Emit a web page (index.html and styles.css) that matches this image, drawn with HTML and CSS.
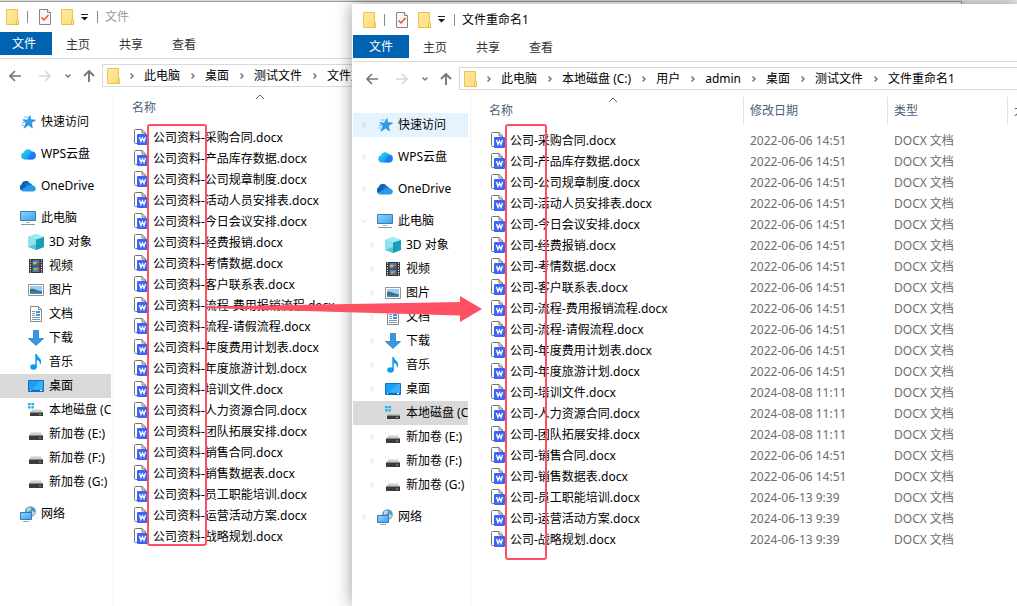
FILE: index.html
```html
<!DOCTYPE html>
<html lang="zh-CN">

<head>
    <meta charset="utf-8">
    <meta name="viewport" content="width=device-width, initial-scale=1.0">
    <title>文件重命名1</title>
    <link rel="stylesheet" href="styles.css">
</head>

<body>
    <!-- icons -->
    <svg class="sprite" aria-hidden="true">
        <defs>
            <linearGradient id="g-folder" x1="0" y1="0" x2="1" y2="1"><stop offset="0" stop-color="#ffe8a0"/><stop offset="1" stop-color="#ffdc78"/></linearGradient>
            <linearGradient id="g-screen" x1="0" y1="0" x2="1" y2="1"><stop offset="0" stop-color="#8fd4ff"/><stop offset="1" stop-color="#3aa0ee"/></linearGradient>
            <linearGradient id="g-cloud" x1="0" y1="0" x2="1" y2="1"><stop offset="0" stop-color="#1fe0e8"/><stop offset="1" stop-color="#1a7af5"/></linearGradient>
            <linearGradient id="g-disk" x1="0" y1="0" x2="0" y2="1"><stop offset="0" stop-color="#e8e8e8"/><stop offset="1" stop-color="#b4b4b4"/></linearGradient>
        </defs>
        <symbol id="folder" viewBox="0 0 13 16">
            <path d="M.5.5h11v10h1v5H.5z" fill="url(#g-folder)" stroke="#e9c24f"/>
            <path d="M10.500 15.500v-4l1-1 1 1v4z" fill="#ffe9a6" stroke="#e3b73c" stroke-width=".8"/>
        </symbol>
        <symbol id="check" viewBox="0 0 12 16">
            <path d="M.5.5h8l3 3v12H.5z" fill="#f7f7f7" stroke="#858585"/>
            <path d="M8.500.500v3h3" fill="#fff" stroke="#858585"/>
            <path d="M2.500 8.500l2.500 2.500 4.500-5" fill="none" stroke="#e8561c" stroke-width="1.500"/>
        </symbol>
        <symbol id="drop" viewBox="0 0 9 7">
            <path d="M1 .500h7" stroke="#222"/><path d="M1 3h7L4.500 6.500z" fill="#111"/>
        </symbol>
        <symbol id="back" viewBox="0 0 12 12">
            <path d="M12 6H1M6 1L1 6l5 5" fill="none" stroke="currentColor" stroke-width="1.700"/>
        </symbol>
        <symbol id="fwd" viewBox="0 0 12 12">
            <path d="M0 6h11M6 1l5 5-5 5" fill="none" stroke="currentColor" stroke-width="1.700"/>
        </symbol>
        <symbol id="up" viewBox="0 0 12 12">
            <path d="M6 12V1M1 6l5-5 5 5" fill="none" stroke="currentColor" stroke-width="1.900"/>
        </symbol>
        <symbol id="down" viewBox="0 0 8 8">
            <path d="M1.500 2.500L4 5l2.500-2.500" fill="none" stroke="currentColor" stroke-width="1.500"/>
        </symbol>
        <symbol id="right" viewBox="0 0 8 8">
            <path d="M2.500 1.500L5 4 2.500 6.500" fill="none" stroke="currentColor" stroke-width="1.500"/>
        </symbol>
        <symbol id="star" viewBox="0 0 16 16">
            <path d="M10 1.500l.800 4.200 4.700.300-4 2.700.900 5.300-3.700-3-4.800 3.200 2.200-5.400-3-2.600 4.400-.300z" fill="#2f9bea" stroke="#1b7fd0" stroke-width=".6"/>
            <path d="M4 3h4M2.500 5.500h3M2 8.500h2.500M1.500 11h2.500" stroke="#6fbdf2"/>
        </symbol>
        <symbol id="wps" viewBox="0 0 16 16">
            <path d="M4.500 13.500a3.600 3.600 0 0 1-.8-7A4.600 4.600 0 0 1 12 5.500a4 4 0 0 1-.500 8z" fill="url(#g-cloud)"/>
            <path d="M6.500 13.500c3-1 1-4 5.500-8a4 4 0 0 1-.500 8z" fill="#1b6cf4" opacity=".6"/>
        </symbol>
        <symbol id="onedrive" viewBox="0 0 16 16">
            <path d="M2 12.500A3.200 3.200 0 0 1 1.500 6.500 4.500 4.500 0 0 1 10 5.500l2 2-9 5z" fill="#0f5fb5"/>
            <path d="M5.500 6.500a4 4 0 0 1 7 1L8 11z" fill="#1673cf"/>
            <path d="M3 13.500a3 3 0 0 1-2.200-1.500l7-4.300c3-1.600 7.700-.700 8 2.800 0 1.600-1.100 3-2.800 3z" fill="#2a9ae8"/>
        </symbol>
        <symbol id="pc" viewBox="0 0 16 16">
            <path d="M.5 1.500h15v9H.5z" fill="url(#g-screen)" stroke="#3c7fae"/>
            <path d="M6 12.500h4" stroke="#9db4c4"/><path d="M1 14.500h14" stroke="#8799a8"/>
        </symbol>
        <symbol id="cube" viewBox="0 0 16 16">
            <path d="M0 3l8-3 8 3v10l-8 3-8-3z" fill="#4fc7d6"/><path d="M16 3L8 5v11l8-3z" fill="#159fb8"/>
            <path d="M0 3l8-3 8 3-8 2.500z" fill="#a5ecf2"/><path d="M0 3l8 2.500V10l-8 3z" fill="#8fe3ea"/>
        </symbol>
        <symbol id="video" viewBox="0 0 16 16">
            <path d="M1 1h14v14H1z" fill="#333"/>
            <path d="M2.500 1.500v13M13.500 1.500v13" stroke="#ddd" stroke-width="1.200" stroke-dasharray="1.200 1.200"/>
            <path d="M4.500 2h7v5.500h-7zM4.500 8.500h7V14h-7z" fill="#3c7fd0"/>
            <path d="M5 4h4v2H5zM6 10.500h4v1.500H6z" fill="#f0b428"/><path d="M8 5h3v2H8zM8 11.500h3V13H8z" fill="#c8402c"/>
            <path d="M5 6.500h3v1H5zM5 12.500h3V14H5z" fill="#4a9a3c"/>
        </symbol>
        <symbol id="picture" viewBox="0 0 16 16">
            <path d="M.5 2.500h15v11H.5z" fill="#fff" stroke="#949494"/>
            <path d="M2 4h12v8H2z" fill="#9ecdf0"/><path d="M2 7c4-1 7 2 12 2.500V12H2z" fill="#3d6f80"/>
            <path d="M2 10.500c4 .500 8-1 12 0V12H2z" fill="#4887bd"/>
        </symbol>
        <symbol id="doc" viewBox="0 0 16 16">
            <path d="M2.500.500h8l3 3v12h-11z" fill="#fff" stroke="#8a8a8a"/><path d="M10.500.500v3h3" fill="none" stroke="#8a8a8a"/>
            <path d="M4 5.500h3M4 7.500h3M4 9.500h3M4 11.500h8M4 13.500h8" stroke="#7897ad"/>
            <path d="M8 5h4v5H8z" fill="#3c98d8"/><path d="M8 7.500h4" stroke="#d6ecfa"/>
        </symbol>
        <symbol id="download" viewBox="0 0 16 16">
            <path d="M5.500.500h5v8h5L8 15.500.500 8.500h5z" fill="#3a97e4" stroke="#2c7cc4" stroke-width=".8"/>
        </symbol>
        <symbol id="music" viewBox="0 0 16 16">
            <ellipse cx="5.500" cy="13" rx="3.300" ry="2.700" fill="#0c9bf0"/>
            <path d="M7.300 0h1.600c.100 3 4.300 4 4.300 7.500 0 1.500-.500 2.500-1.300 3.500.500-3-1-4.500-3.100-5V13H7.300z" fill="#0c9bf0"/>
        </symbol>
        <symbol id="desktop" viewBox="0 0 16 16">
            <path d="M.5 2.500h15v11H.5z" fill="#1ba0f4" stroke="#0c74bc"/><path d="M4 11.500L13 3h2v8.500z" fill="#3fb0f8"/>
            <path d="M1 12.500h14" stroke="#0d6db0"/><path d="M2 12.500h1M12 12.500h2" stroke="#fff"/>
        </symbol>
        <symbol id="disk" viewBox="0 0 16 16">
            <path d="M3.500 6h9l2.500 4H1z" fill="url(#g-disk)"/>
            <path d="M1 9.500h14V14H1z" fill="#3b3b3b"/><path d="M1 9.500h14" stroke="#8b8b8b"/><path d="M11 11.500h2v1h-2z" fill="#3de45a"/>
        </symbol>
        <symbol id="sysdisk" viewBox="0 0 16 16">
            <path d="M0 1h2.600v2.300H0zM3.400 1H6v2.300H3.400zM0 4.200h2.600v2.300H0zM3.400 4.200H6v2.300H3.400z" fill="#1fb4ec"/>
            <path d="M4.500 7h8L15 10.500H2z" fill="url(#g-disk)"/>
            <path d="M2 10h13v4H2z" fill="#3b3b3b"/><path d="M2 10.500h13" stroke="#8b8b8b"/><path d="M11 12h2v1h-2z" fill="#3de45a"/>
        </symbol>
        <symbol id="network" viewBox="0 0 16 16">
            <circle cx="10.500" cy="5.500" r="5.300" fill="#5797bd"/><path d="M7 2.500c2-2 5-1 4 1s-2 1-4 3zM12 5l3 1-1 3-2 .500z" fill="#b9d8e6"/>
            <path d="M.5 6.500h11v7H.5z" fill="url(#g-screen)" stroke="#2f7db5"/><path d="M3 15.500h6" stroke="#9aaab5"/>
        </symbol>
        <symbol id="docx" viewBox="0 0 14 16">
            <path d="M3 14.500H1.500a1 1 0 0 1-1-1v-12a1 1 0 0 1 1-1H8L11.500 4v2" fill="#fff" stroke="#757575"/>
            <path d="M8 .500V4h3.500" fill="none" stroke="#757575"/>
            <rect x="3" y="5" width="11" height="11" rx="1" fill="#3b66f5"/>
            <path d="M5.500 8l1.500 4.500L8.500 9 10 12.500 11.500 8" fill="none" stroke="#fff" stroke-width="1.300"/>
        </symbol>
    </svg>

    <main class="desktop">
        <section class="window window-back">
            <header class="titlebar">
                <svg class="icon-folder"><use href="#folder"/></svg>
                <span class="bar"></span>
                <button class="quick" aria-label="属性"><svg class="icon-check"><use href="#check"/></svg></button>
                <button class="quick" aria-label="新建文件夹"><svg class="icon-folder"><use href="#folder"/></svg></button>
                <button class="quick quick-drop" aria-label="自定义"><svg class="icon-drop"><use href="#drop"/></svg></button>
                <span class="bar"></span>
                <h1 class="title">文件</h1>
            </header>
            <nav class="tabs">
                <button class="tab tab-file">文件</button>
                <button class="tab">主页</button>
                <button class="tab">共享</button>
                <button class="tab">查看</button>
            </nav>
            <div class="toolbar">
                <button class="arrow" aria-label="后退"><svg class="icon-arrow"><use href="#back"/></svg></button>
                <button class="arrow off" aria-label="前进"><svg class="icon-arrow"><use href="#fwd"/></svg></button>
                <button class="arrow arrow-small" aria-label="最近"><svg class="icon-small"><use href="#down"/></svg></button>
                <button class="arrow arrow-up" aria-label="上移"><svg class="icon-arrow"><use href="#up"/></svg></button>
                <div class="address">
                    <svg class="icon-folder"><use href="#folder"/></svg>
                    <svg class="step"><use href="#right"/></svg><a href="#">此电脑</a>
                    <svg class="step"><use href="#right"/></svg><a href="#">桌面</a>
                    <svg class="step"><use href="#right"/></svg><a href="#">测试文件</a>
                    <svg class="step"><use href="#right"/></svg><a href="#">文件重命名</a>
                </div>
            </div>
            <div class="content">
                <ul class="tree">
                    <li><a href="#"><svg class="icon"><use href="#star"/></svg>快速访问</a></li>
                    <li><a href="#"><svg class="icon"><use href="#wps"/></svg>WPS云盘</a></li>
                    <li><a href="#"><svg class="icon"><use href="#onedrive"/></svg>OneDrive</a></li>
                    <li><a href="#"><svg class="icon"><use href="#pc"/></svg>此电脑</a>
                        <ul class="subtree">
                            <li><a href="#"><svg class="icon"><use href="#cube"/></svg>3D 对象</a></li>
                            <li><a href="#"><svg class="icon"><use href="#video"/></svg>视频</a></li>
                            <li><a href="#"><svg class="icon"><use href="#picture"/></svg>图片</a></li>
                            <li><a href="#"><svg class="icon"><use href="#doc"/></svg>文档</a></li>
                            <li><a href="#"><svg class="icon"><use href="#download"/></svg>下载</a></li>
                            <li><a href="#"><svg class="icon"><use href="#music"/></svg>音乐</a></li>
                            <li><a class="selected" href="#"><svg class="icon"><use href="#desktop"/></svg>桌面</a></li>
                            <li><a href="#"><svg class="icon"><use href="#sysdisk"/></svg>本地磁盘 (C:)</a></li>
                            <li><a href="#"><svg class="icon"><use href="#disk"/></svg>新加卷 (E:)</a></li>
                            <li><a href="#"><svg class="icon"><use href="#disk"/></svg>新加卷 (F:)</a></li>
                            <li><a href="#"><svg class="icon"><use href="#disk"/></svg>新加卷 (G:)</a></li>
                        </ul>
                    </li>
                    <li><a href="#"><svg class="icon"><use href="#network"/></svg>网络</a></li>
                </ul>
                <div class="pane">
                    <table class="files">
                        <thead>
                            <tr><th class="col-name"><div class="head">名称<svg class="sort" viewBox="0 0 10 6"><path d="M1 5l4-4 4 4"/></svg></div></th></tr>
                        </thead>
                        <tbody>
                            <tr><td><svg class="icon-docx"><use href="#docx"/></svg>公司资料-采购合同.docx</td></tr>
                            <tr><td><svg class="icon-docx"><use href="#docx"/></svg>公司资料-产品库存数据.docx</td></tr>
                            <tr><td><svg class="icon-docx"><use href="#docx"/></svg>公司资料-公司规章制度.docx</td></tr>
                            <tr><td><svg class="icon-docx"><use href="#docx"/></svg>公司资料-活动人员安排表.docx</td></tr>
                            <tr><td><svg class="icon-docx"><use href="#docx"/></svg>公司资料-今日会议安排.docx</td></tr>
                            <tr><td><svg class="icon-docx"><use href="#docx"/></svg>公司资料-经费报销.docx</td></tr>
                            <tr><td><svg class="icon-docx"><use href="#docx"/></svg>公司资料-考情数据.docx</td></tr>
                            <tr><td><svg class="icon-docx"><use href="#docx"/></svg>公司资料-客户联系表.docx</td></tr>
                            <tr><td><svg class="icon-docx"><use href="#docx"/></svg>公司资料-流程-费用报销流程.docx</td></tr>
                            <tr><td><svg class="icon-docx"><use href="#docx"/></svg>公司资料-流程-请假流程.docx</td></tr>
                            <tr><td><svg class="icon-docx"><use href="#docx"/></svg>公司资料-年度费用计划表.docx</td></tr>
                            <tr><td><svg class="icon-docx"><use href="#docx"/></svg>公司资料-年度旅游计划.docx</td></tr>
                            <tr><td><svg class="icon-docx"><use href="#docx"/></svg>公司资料-培训文件.docx</td></tr>
                            <tr><td><svg class="icon-docx"><use href="#docx"/></svg>公司资料-人力资源合同.docx</td></tr>
                            <tr><td><svg class="icon-docx"><use href="#docx"/></svg>公司资料-团队拓展安排.docx</td></tr>
                            <tr><td><svg class="icon-docx"><use href="#docx"/></svg>公司资料-销售合同.docx</td></tr>
                            <tr><td><svg class="icon-docx"><use href="#docx"/></svg>公司资料-销售数据表.docx</td></tr>
                            <tr><td><svg class="icon-docx"><use href="#docx"/></svg>公司资料-员工职能培训.docx</td></tr>
                            <tr><td><svg class="icon-docx"><use href="#docx"/></svg>公司资料-运营活动方案.docx</td></tr>
                            <tr><td><svg class="icon-docx"><use href="#docx"/></svg>公司资料-战略规划.docx</td></tr>
                        </tbody>
                    </table>
                </div>
            </div>
        </section>

        <section class="window window-front">
            <header class="titlebar">
                <svg class="icon-folder"><use href="#folder"/></svg>
                <span class="bar"></span>
                <button class="quick" aria-label="属性"><svg class="icon-check"><use href="#check"/></svg></button>
                <button class="quick" aria-label="新建文件夹"><svg class="icon-folder"><use href="#folder"/></svg></button>
                <button class="quick quick-drop" aria-label="自定义"><svg class="icon-drop"><use href="#drop"/></svg></button>
                <span class="bar"></span>
                <h1 class="title">文件重命名1</h1>
            </header>
            <nav class="tabs">
                <button class="tab tab-file">文件</button>
                <button class="tab">主页</button>
                <button class="tab">共享</button>
                <button class="tab">查看</button>
            </nav>
            <div class="toolbar">
                <button class="arrow" aria-label="后退"><svg class="icon-arrow"><use href="#back"/></svg></button>
                <button class="arrow off" aria-label="前进"><svg class="icon-arrow"><use href="#fwd"/></svg></button>
                <button class="arrow arrow-small" aria-label="最近"><svg class="icon-small"><use href="#down"/></svg></button>
                <button class="arrow arrow-up" aria-label="上移"><svg class="icon-arrow"><use href="#up"/></svg></button>
                <div class="address">
                    <svg class="icon-folder"><use href="#folder"/></svg>
                    <svg class="step"><use href="#right"/></svg><a href="#">此电脑</a>
                    <svg class="step"><use href="#right"/></svg><a href="#">本地磁盘 (C:)</a>
                    <svg class="step"><use href="#right"/></svg><a href="#">用户</a>
                    <svg class="step"><use href="#right"/></svg><a href="#">admin</a>
                    <svg class="step"><use href="#right"/></svg><a href="#">桌面</a>
                    <svg class="step"><use href="#right"/></svg><a href="#">测试文件</a>
                    <svg class="step"><use href="#right"/></svg><a href="#">文件重命名1</a>
                </div>
            </div>
            <div class="content">
                <ul class="tree">
                    <li><a class="hover" href="#"><svg class="expand"><use href="#right"/></svg><svg class="icon"><use href="#star"/></svg>快速访问</a></li>
                    <li><a href="#"><svg class="expand"><use href="#right"/></svg><svg class="icon"><use href="#wps"/></svg>WPS云盘</a></li>
                    <li><a href="#"><svg class="expand"><use href="#right"/></svg><svg class="icon"><use href="#onedrive"/></svg>OneDrive</a></li>
                    <li><a href="#"><svg class="expand"><use href="#down"/></svg><svg class="icon"><use href="#pc"/></svg>此电脑</a>
                        <ul class="subtree">
                            <li><a href="#"><svg class="expand"><use href="#right"/></svg><svg class="icon"><use href="#cube"/></svg>3D 对象</a></li>
                            <li><a href="#"><svg class="expand"><use href="#right"/></svg><svg class="icon"><use href="#video"/></svg>视频</a></li>
                            <li><a href="#"><svg class="expand"><use href="#right"/></svg><svg class="icon"><use href="#picture"/></svg>图片</a></li>
                            <li><a href="#"><svg class="expand"><use href="#right"/></svg><svg class="icon"><use href="#doc"/></svg>文档</a></li>
                            <li><a href="#"><svg class="expand"><use href="#right"/></svg><svg class="icon"><use href="#download"/></svg>下载</a></li>
                            <li><a href="#"><svg class="expand"><use href="#right"/></svg><svg class="icon"><use href="#music"/></svg>音乐</a></li>
                            <li><a href="#"><svg class="expand"><use href="#right"/></svg><svg class="icon"><use href="#desktop"/></svg>桌面</a></li>
                            <li><a class="selected" href="#"><svg class="expand"><use href="#right"/></svg><svg class="icon"><use href="#sysdisk"/></svg>本地磁盘 (C:)</a></li>
                            <li><a href="#"><svg class="expand"><use href="#right"/></svg><svg class="icon"><use href="#disk"/></svg>新加卷 (E:)</a></li>
                            <li><a href="#"><svg class="expand"><use href="#right"/></svg><svg class="icon"><use href="#disk"/></svg>新加卷 (F:)</a></li>
                            <li><a href="#"><svg class="expand"><use href="#right"/></svg><svg class="icon"><use href="#disk"/></svg>新加卷 (G:)</a></li>
                        </ul>
                    </li>
                    <li><a href="#"><svg class="expand"><use href="#right"/></svg><svg class="icon"><use href="#network"/></svg>网络</a></li>
                </ul>
                <div class="pane">
                    <table class="files">
                        <thead>
                            <tr>
                                <th class="col-name"><div class="head">名称<svg class="sort" viewBox="0 0 10 6"><path d="M1 5l4-4 4 4"/></svg></div></th>
                                <th class="col-date"><div class="head">修改日期</div></th>
                                <th class="col-type"><div class="head">类型</div></th>
                                <th class="col-size"><div class="head">大小</div></th>
                            </tr>
                        </thead>
                        <tbody>
                            <tr><td><svg class="icon-docx"><use href="#docx"/></svg>公司-采购合同.docx</td><td>2022-06-06 14:51</td><td>DOCX 文档</td></tr>
                            <tr><td><svg class="icon-docx"><use href="#docx"/></svg>公司-产品库存数据.docx</td><td>2022-06-06 14:51</td><td>DOCX 文档</td></tr>
                            <tr><td><svg class="icon-docx"><use href="#docx"/></svg>公司-公司规章制度.docx</td><td>2022-06-06 14:51</td><td>DOCX 文档</td></tr>
                            <tr><td><svg class="icon-docx"><use href="#docx"/></svg>公司-活动人员安排表.docx</td><td>2022-06-06 14:51</td><td>DOCX 文档</td></tr>
                            <tr><td><svg class="icon-docx"><use href="#docx"/></svg>公司-今日会议安排.docx</td><td>2022-06-06 14:51</td><td>DOCX 文档</td></tr>
                            <tr><td><svg class="icon-docx"><use href="#docx"/></svg>公司-经费报销.docx</td><td>2022-06-06 14:51</td><td>DOCX 文档</td></tr>
                            <tr><td><svg class="icon-docx"><use href="#docx"/></svg>公司-考情数据.docx</td><td>2022-06-06 14:51</td><td>DOCX 文档</td></tr>
                            <tr><td><svg class="icon-docx"><use href="#docx"/></svg>公司-客户联系表.docx</td><td>2022-06-06 14:51</td><td>DOCX 文档</td></tr>
                            <tr><td><svg class="icon-docx"><use href="#docx"/></svg>公司-流程-费用报销流程.docx</td><td>2022-06-06 14:51</td><td>DOCX 文档</td></tr>
                            <tr><td><svg class="icon-docx"><use href="#docx"/></svg>公司-流程-请假流程.docx</td><td>2022-06-06 14:51</td><td>DOCX 文档</td></tr>
                            <tr><td><svg class="icon-docx"><use href="#docx"/></svg>公司-年度费用计划表.docx</td><td>2022-06-06 14:51</td><td>DOCX 文档</td></tr>
                            <tr><td><svg class="icon-docx"><use href="#docx"/></svg>公司-年度旅游计划.docx</td><td>2022-06-06 14:51</td><td>DOCX 文档</td></tr>
                            <tr><td><svg class="icon-docx"><use href="#docx"/></svg>公司-培训文件.docx</td><td>2024-08-08 11:11</td><td>DOCX 文档</td></tr>
                            <tr><td><svg class="icon-docx"><use href="#docx"/></svg>公司-人力资源合同.docx</td><td>2024-08-08 11:11</td><td>DOCX 文档</td></tr>
                            <tr><td><svg class="icon-docx"><use href="#docx"/></svg>公司-团队拓展安排.docx</td><td>2024-08-08 11:11</td><td>DOCX 文档</td></tr>
                            <tr><td><svg class="icon-docx"><use href="#docx"/></svg>公司-销售合同.docx</td><td>2022-06-06 14:51</td><td>DOCX 文档</td></tr>
                            <tr><td><svg class="icon-docx"><use href="#docx"/></svg>公司-销售数据表.docx</td><td>2022-06-06 14:51</td><td>DOCX 文档</td></tr>
                            <tr><td><svg class="icon-docx"><use href="#docx"/></svg>公司-员工职能培训.docx</td><td>2024-06-13 9:39</td><td>DOCX 文档</td></tr>
                            <tr><td><svg class="icon-docx"><use href="#docx"/></svg>公司-运营活动方案.docx</td><td>2024-06-13 9:39</td><td>DOCX 文档</td></tr>
                            <tr><td><svg class="icon-docx"><use href="#docx"/></svg>公司-战略规划.docx</td><td>2024-06-13 9:39</td><td>DOCX 文档</td></tr>
                        </tbody>
                    </table>
                </div>
            </div>
        </section>

        <!-- before / after marks -->
        <div class="mark mark-before"></div>
        <div class="mark mark-after"></div>
        <svg class="mark-arrow" viewBox="0 0 276 26"><path d="M0 10.500L253 6V0l22 13-22 13v-6.500L0 12z"/></svg>
    </main>
</body>

</html>
```
FILE: styles.css
```css
* {
    box-sizing: border-box;
}

body {
    margin: 0;
    background-color: #ececec;
    color: #000;
    font-family: "Noto Sans", "Noto Sans CJK SC", sans-serif;
    font-size: 12px;
    line-height: 20px;
}

svg {
    display: block;
    flex: none;
}

button {
    padding: 0;
    border: none;
    background: none;
    color: inherit;
    font: inherit;
}

a {
    color: inherit;
    text-decoration: none;
}

ul {
    margin: 0;
    padding: 0;
    list-style: none;
}

.sprite {
    position: absolute;
    width: 0;
    height: 0;
}

/* windows */
.desktop {
    position: relative;
    height: 100vh;
    overflow: hidden;
}

.window {
    position: absolute;
    bottom: 0;
    display: flex;
    flex-direction: column;
    padding-left: 1px;
    background-color: #fff;
}

.window-back {
    top: 2px;
    left: -5px;
    right: 56px;
    box-shadow: 0 0 0 1px #999, 0 0 8px rgba(0, 0, 0, 0.2);
}

.window-front {
    top: 4px;
    left: 352px;
    right: 0;
    box-shadow: 0 0 16px rgba(0, 0, 0, 0.4);
}

/* title bar */
.titlebar {
    display: flex;
    align-items: center;
    height: 31px;
    padding-left: 10px;
}

.window-back .titlebar {
    height: 30px;
}

.icon-folder {
    width: 13px;
    height: 16px;
}

.icon-check {
    width: 12px;
    height: 16px;
}

.icon-drop {
    width: 9px;
    height: 7px;
}

.bar {
    width: 1px;
    height: 12px;
    margin: 0 7px 0 8px;
    background-color: #8a8a8a;
}

.quick {
    margin-left: 10px;
}

.bar + .quick {
    margin-left: 4px;
}

.quick-drop {
    margin-left: 6px;
}

.title {
    margin: 0;
    font-size: 12px;
    font-weight: normal;
}

.window-back .title {
    color: #999;
}

/* ribbon tabs */
.tabs {
    display: flex;
    height: 27px;
    border-bottom: 1px solid #dadbdc;
}

.tab {
    height: 23px;
    padding: 2px 15px 0 14px;
    color: #333;
}

.tab-file {
    padding: 0 16px;
    background-color: #0063b1;
    color: #fff;
}

/* address bar */
.toolbar {
    display: flex;
    align-items: center;
    padding: 5px 0 7px 13px;
}

.arrow {
    width: 12px;
    margin-right: 18px;
    color: #777;
}

.off {
    margin-right: 13px;
    color: #d8d8d8;
}

.arrow-small {
    width: 8px;
    margin-right: 11px;
}

.arrow-up {
    margin-right: 7px;
}

.icon-arrow {
    width: 12px;
    height: 12px;
}

.icon-small {
    width: 8px;
    height: 8px;
}

.address {
    display: flex;
    flex: 1;
    align-items: center;
    height: 23px;
    padding-left: 4px;
    border: 1px solid #d9d9d9;
    border-right: none;
    white-space: nowrap;
    overflow: hidden;
}

.step {
    width: 8px;
    height: 8px;
    margin: 0 8px 0 9px;
    color: #777;
}

.icon-folder + .step {
    margin-left: 8px;
}

/* content */
.content {
    display: flex;
    flex: 1;
    min-height: 0;
}

.tree {
    width: 118px;
    padding: 16px 2px 0 0;
    border-right: 1px solid #f2f2f2;
}

.tree > li {
    margin-bottom: 8px;
}

.tree a {
    display: flex;
    align-items: center;
    gap: 5px;
    height: 24px;
    padding-left: 24px;
    white-space: nowrap;
    overflow: hidden;
}

.tree .subtree a {
    padding-left: 32px;
}

.icon {
    width: 16px;
    height: 16px;
}

.expand {
    width: 8px;
    height: 8px;
    margin-left: -17px;
    margin-right: 4px;
    color: #ebebeb;
}

.tree .hover {
    background-color: #e5f3ff;
}

.tree .selected {
    background-color: #d9d9d9;
}

.selected .expand,
.hover .expand {
    color: #d3dde5;
}

.pane {
    flex: 1;
    min-width: 0;
    padding-left: 12px;
    overflow: hidden;
}

.files {
    width: 560px;
    table-layout: fixed;
    border-collapse: collapse;
}

.window-back .files {
    width: 268px;
}

.files th {
    height: 33px;
    padding: 0;
    font-weight: normal;
    text-align: left;
    vertical-align: top;
}

.head {
    position: relative;
    height: 27px;
    padding-left: 6px;
    border-left: 1px solid #e2e2e2;
    color: #4c607a;
    line-height: 27px;
}

.col-name .head {
    border-left: none;
}

.col-name {
    width: 260px;
}

.col-date {
    width: 144px;
}

.col-type {
    width: 120px;
}

.sort {
    position: absolute;
    top: 0;
    left: 50%;
    width: 10px;
    height: 6px;
    margin-left: -5px;
    fill: none;
    stroke: #666;
}

.files td {
    height: 21px;
    padding: 0 0 0 7px;
    color: #6d6d6d;
    white-space: nowrap;
}

.files td:first-child {
    display: flex;
    align-items: center;
    gap: 5px;
    padding-left: 8px;
    color: #000;
}

.icon-docx {
    width: 14px;
    height: 16px;
    margin-bottom: 1px;
}

/* marks over the windows */
.mark {
    position: absolute;
    top: 124px;
    border: 2px solid #ff4f63;
    border-radius: 3px;
}

.mark-before {
    left: 147px;
    width: 60px;
    height: 422px;
}

.mark-after {
    left: 505px;
    width: 42px;
    height: 436px;
}

.mark-arrow {
    position: absolute;
    top: 296px;
    left: 207px;
    width: 276px;
    height: 26px;
    fill: #ff4f63;
}
```
